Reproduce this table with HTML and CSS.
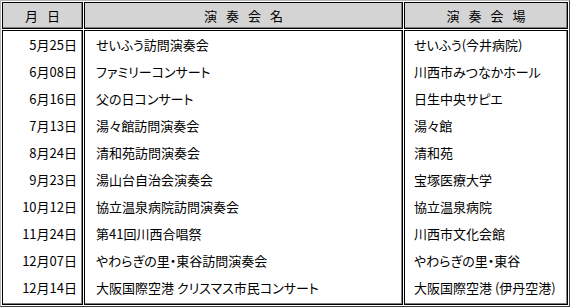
FILE: index.html
```
<!DOCTYPE html>
<html lang="ja">
<head>
    <meta charset="UTF-8">
    <meta name="viewport" content="width=device-width, initial-scale=1.0">
    <title>演奏会スケジュール</title>
    <link rel="stylesheet" href="styles.css">
</head>
<body>
    <!-- 演奏会の予定表 -->
    <table class="schedule">
        <tr>
            <th class="col-date">月日</th>
            <th class="col-name">演奏会名</th>
            <th class="col-place">演奏会場</th>
        </tr>
        <tr>
            <td class="col-date">
                <div>5月25日</div>
                <div>6月08日</div>
                <div>6月16日</div>
                <div>7月13日</div>
                <div>8月24日</div>
                <div>9月23日</div>
                <div>10月12日</div>
                <div>11月24日</div>
                <div>12月07日</div>
                <div>12月14日</div>
            </td>
            <td class="col-name">
                <div>せいふう訪問演奏会</div>
                <div>ファミリーコンサート</div>
                <div>父の日コンサート</div>
                <div>湯々館訪問演奏会</div>
                <div>清和苑訪問演奏会</div>
                <div>湯山台自治会演奏会</div>
                <div>協立温泉病院訪問演奏会</div>
                <div>第41回川西合唱祭</div>
                <div>やわらぎの里・東谷訪問演奏会</div>
                <div>大阪国際空港 クリスマス市民コンサート</div>
            </td>
            <td class="col-place">
                <div>せいふう(今井病院)</div>
                <div>川西市みつなかホール</div>
                <div>日生中央サピエ</div>
                <div>湯々館</div>
                <div>清和苑</div>
                <div>宝塚医療大学</div>
                <div>協立温泉病院</div>
                <div>川西市文化会館</div>
                <div>やわらぎの里・東谷</div>
                <div>大阪国際空港 (伊丹空港)</div>
            </td>
        </tr>
    </table>
</body>
</html>
```

FILE: styles.css
```
body {
    margin: 0;
    padding: 0;
    background-color: #fff;
    font-family: "Noto Sans CJK JP", sans-serif;
    font-size: 13px;
    color: #000;
}
.schedule {
    width: 570px;
    height: 307px;
    border-collapse: separate;
    border-spacing: 1px;
    border: 1px solid;
    border-color: #b4b4b4 #404040 #404040 #b4b4b4;
    table-layout: fixed;
}
.schedule th,
.schedule td {
    box-sizing: border-box;
    border: 1px solid #000;
    box-shadow: inset -1px -1px 0 #808080;
    padding: 0;
}
.schedule th {
    height: 27px;
    background-color: #d4d4d4;
    font-weight: normal;
    text-align: center;
    letter-spacing: 9px;
    padding-left: 9px;
}
.schedule td {
    height: 275px;
    vertical-align: top;
    padding-top: 0;
}
.schedule td div {
    height: 27px;
    line-height: 27px;
    white-space: nowrap;
    font-feature-settings: "palt";
}
.col-date {
    width: 81px;
}
.col-name {
    width: 319px;
}
.col-place {
    width: 164px;
}
td.col-date {
    text-align: right;
    padding-right: 5px;
}
td.col-name {
    padding-left: 11px;
}
td.col-place {
    padding-left: 9px;
}
```
